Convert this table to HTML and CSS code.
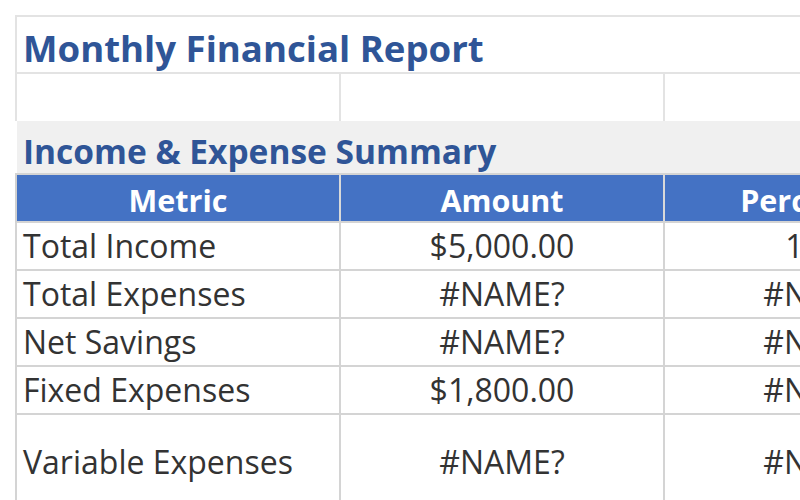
FILE: index.html
```html
<!DOCTYPE html>
<html lang="en">
<head>
<meta charset="utf-8">
<title>Monthly Financial Report</title>
<link rel="stylesheet" href="styles.css">
</head>
<body>
<div class="sheet">
  <div class="row row-title">
    <div class="cell cell-merged title">Monthly Financial Report</div>
  </div>
  <div class="row row-blank">
    <div class="cell"></div>
    <div class="cell"></div>
    <div class="cell"></div>
  </div>
  <div class="row row-section">
    <div class="cell cell-merged section">Income &amp; Expense Summary</div>
  </div>
  <div class="row row-head">
    <div class="cell">Metric</div>
    <div class="cell">Amount</div>
    <div class="cell">Percentage</div>
  </div>
  <div class="row row-data">
    <div class="cell label">Total Income</div>
    <div class="cell num">$5,000.00</div>
    <div class="cell num">100%</div>
  </div>
  <div class="row row-data">
    <div class="cell label">Total Expenses</div>
    <div class="cell num">#NAME?</div>
    <div class="cell num">#NAME?</div>
  </div>
  <div class="row row-data">
    <div class="cell label">Net Savings</div>
    <div class="cell num">#NAME?</div>
    <div class="cell num">#NAME?</div>
  </div>
  <div class="row row-data">
    <div class="cell label">Fixed Expenses</div>
    <div class="cell num">$1,800.00</div>
    <div class="cell num">#NAME?</div>
  </div>
  <div class="row row-data row-tall">
    <div class="cell label">Variable Expenses</div>
    <div class="cell num">#NAME?</div>
    <div class="cell num">#NAME?</div>
  </div>
</div>
</body>
</html>
```

FILE: styles.css
```css
html, body {
  margin: 0;
  padding: 0;
  background: #ffffff;
  overflow: hidden;
}

body {
  font-family: "Open Sans", "Liberation Sans", sans-serif;
  color: #333333;
}

.sheet {
  margin: 15px 0 0 15px;
  width: 1000px;
}

.row {
  display: flex;
  box-sizing: border-box;
}

.cell {
  flex: none;
  width: 322px;
  box-sizing: content-box;
  white-space: nowrap;
  overflow: hidden;
  line-height: normal;
}

.cell-merged {
  width: 985px;
}

/* Title row */
.row-title {
  height: 59px;
  border-top: 2px solid #e3e3e3;
  border-left: 2px solid #e3e3e3;
  border-bottom: 2px solid #e3e3e3;
}
.title {
  padding: 6px 0 0 6px;
  font-size: 36.6px;
  font-weight: 700;
  color: #2f5597;
}

/* Empty row */
.row-blank {
  height: 47px;
  border-left: 2px solid #e3e3e3;
}
.row-blank .cell {
  border-right: 2px solid #e3e3e3;
}

/* Section heading */
.row-section {
  height: 54px;
  padding-left: 2px;
  border-bottom: 2px solid #d4d4d4;
}
.row-section .cell {
  background: #f0f0f0;
}
.section {
  padding: 7px 0 0 6px;
  font-size: 33.5px;
  font-weight: 700;
  color: #2f5597;
}

/* Header row */
.row-head {
  height: 48px;
  border-left: 2px solid #d0d0d0;
  border-bottom: 2px solid #d4d4d4;
}
.row-head .cell {
  background: #4472c4;
  color: #ffffff;
  font-weight: 700;
  font-size: 30.5px;
  text-align: center;
  padding-top: 4px;
  border-right: 2px solid #d9d9d9;
}

/* Data rows */
.row-data {
  height: 48px;
  border-left: 2px solid #d4d4d4;
  border-bottom: 2px solid #d4d4d4;
}
.row-data .cell {
  font-size: 32px;
  padding-top: 1px;
  border-right: 2px solid #d4d4d4;
}
.label {
  padding-left: 6px;
  width: 316px;
}
.num {
  text-align: center;
}

.row-tall {
  height: 95px;
}
.row-tall .cell {
  padding-top: 25px;
}
```
